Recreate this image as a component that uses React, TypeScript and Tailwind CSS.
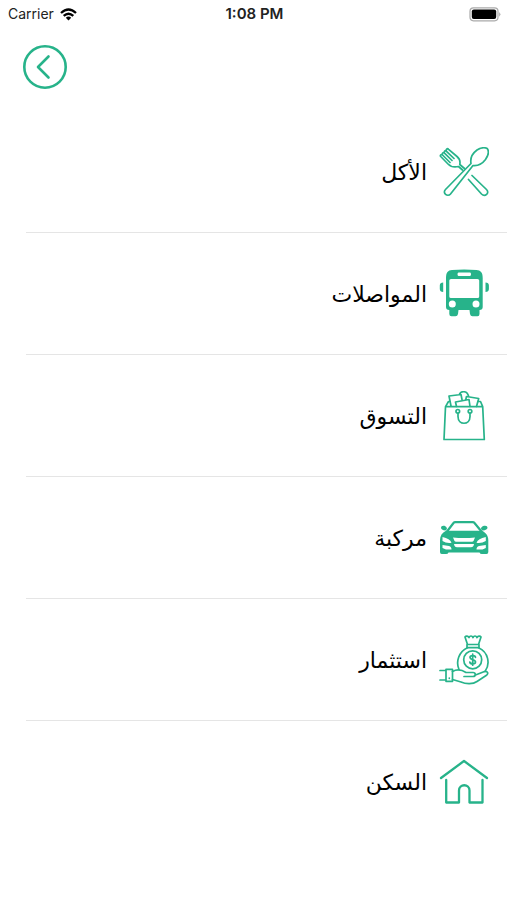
import type { ReactNode } from 'react'

const GREEN = '#27b38a'

function Icon({ children, width = 1.7 }: { children: ReactNode; width?: number }) {
  return (
    <svg
      viewBox="0 0 50 50"
      className="size-[50px] shrink-0"
      fill="none"
      stroke={GREEN}
      strokeWidth={width}
      strokeLinecap="round"
      strokeLinejoin="round"
      aria-hidden="true"
    >
      {children}
    </svg>
  )
}

function FoodIcon() {
  return (
    <Icon>
      <path d="M32 16.500C31 11 34 6 38 3C41.500 .8 46 .2 48.200 1.500C50 4 49.300 8.500 46.500 12.500C43.500 16.500 39 19 34 18.500L11.500 47C8.500 50.500 3 46 6.500 42.500Z" />
      <path d="M23.500 23L19.500 19.500C15.500 20.500 11.500 19.500 9 17L1.700 9.500C.8 8.300 2.200 6.800 3.500 8L11 15.500M3.500 8C2.600 6.500 4.200 5 5.500 6.200L13 13.500M5.500 6.200C4.600 4.500 6.200 3 7.500 4.300L15 11.500M7.500 4.300C6.500 2.500 8.300 1 9.600 2.300L18 9.500C21 12 21.500 14 20.800 17.500L25.500 21.500" />
      <path d="M29.500 32.500L42.500 47C46 50.500 51 46 47.500 42.500L33 28.500" />
    </Icon>
  )
}

function BusIcon() {
  return (
    <Icon>
      <g fill={GREEN} stroke="none">
        <path
          fillRule="evenodd"
          d="M7 9C7 3 9 1.500 13 1Q25 -.2 37.500 1C41.500 1.500 43.700 3 43.700 9V38Q43.700 41 40.500 41V45Q40.500 47.300 38.500 47.300H33.500Q31.500 47.300 31 45L30.500 41H19.500L19 45Q18.500 47.300 16.500 47.300H12.500Q10.300 47.300 10.300 45V41Q7 41 7 38ZM19.500 3.500Q18.500 3.500 18.500 5.200T19.500 7H31Q32 7 32 5.200T31 3.500ZM12 10Q10.300 10 10.300 11.500V27.500Q10.300 29 12 29H38.500Q40.200 29 40.200 27.500V11.500Q40.200 10 38.500 10ZM13.300 31.500A3.500 3.500 0 1 0 13.300 38.500A3.500 3.500 0 1 0 13.300 31.500ZM37 31.500A3.500 3.500 0 1 0 37 38.500A3.500 3.500 0 1 0 37 31.500Z"
        />
        <path d="M4.200 13.500V23C2 23 .8 22 .8 20V16.500C.8 14.500 2 13.500 4.200 13.500ZM46.500 13.500V23C48.700 23 49.900 22 49.900 20V16.500C49.900 14.500 48.700 13.500 46.500 13.500Z" />
      </g>
    </Icon>
  )
}

function ShoppingIcon() {
  return (
    <Icon>
      <path d="M6.500 15.700H43.700L45.300 48.500H5ZM6.500 15.700L9.500 10.500H11M43.700 15.700L41.500 10.500H39" />
      <circle cx="18.800" cy="20.300" r="1.800" />
      <circle cx="31" cy="20.300" r="1.800" />
      <path d="M19 22.500V25.500C19 34.500 31 34.500 31 25.500V22.500" />
      <path d="M12 15L10 5L22 3.500L23 8.500M20.500 3.200C22 -.3 28 -.5 29.500 5M17.500 15.500L16.500 11L30 8.500L31 15.500M27.500 5.500L39.700 7.500L37.500 15.500M27.500 5.500L26.800 8.500" />
    </Icon>
  )
}

function CarIcon() {
  return (
    <Icon width={2.2}>
      <path d="M8 18.500L14.500 10Q15 9.200 16.500 9.200H33.500Q35 9.200 35.500 10L42.500 18.500" />
      <path
        fill={GREEN}
        stroke="none"
        fillRule="evenodd"
        d="M7 17.700H43C47 19.500 49.300 23 49.300 27V39Q49.300 41 47.500 41H43Q41 41 40.500 39.500H9.500Q9 41 7 41H2.700Q1 41 1 39V27C1 23 3 19.500 7 17.700ZM3.500 24V28Q7.500 30.500 12.500 29.700Q11 25.500 3.500 24ZM46.800 24V28Q42.500 30.500 37.500 29.700Q39 25.500 46.800 24ZM14 24.500L15.500 28Q16 28.800 17 28.800H33Q34 28.800 34.500 28L36 24.500Q25 25.500 14 24.500ZM15 31Q15.500 34.300 18 34.300H32Q34.500 34.300 35 31ZM3.500 32V35L7 36.500H12.500Q12.500 33.500 10 33ZM46.800 32V35L43.500 36.500H37.500Q37.500 33.500 40 33Z"
      />
      <path fill={GREEN} stroke="none" d="M8 16L6.500 17.500Q2 17 2 14.500Q2 12.300 5.500 12.800Q8 13.500 8 16ZM42 16L43.500 17.500Q48.500 17 48.500 14.500Q48.500 12.300 45 12.800Q42 13.500 42 16Z" />
    </Icon>
  )
}

function InvestIcon() {
  return (
    <Icon>
      <path d="M28.500 9.500L26 2C27 .5 29 .8 30 2.500C31 .5 33 .5 34 2.500C35 .5 37 .5 38 2.500C39 .8 41 .5 42 2L39.500 9.500M28 9.500H40V12.700H28Z" />
      <path d="M28.500 12.700C20 16.500 16.500 26.500 20 34.500M39.500 12.700C49.500 17 51.500 29 46 36.500" />
      <circle cx="33.700" cy="24.800" r="9" />
      <path d="M36.500 22.300C36 20 31 20 31 22.500C31 25 36.500 24.300 36.500 27C36.500 29.500 31.200 29.500 30.800 27M33.700 19.200V30.200" />
      <path d="M1 35.500H6.500M1 45H6.500M7 34.300H13.500V46.300H7ZM10.300 43V43.300" />
      <path d="M13.500 36.500C18 34 22.500 34.500 27 37.500H34C37 37.500 37 41.500 34 41.500H25M36.500 40L45.500 36.500C48.500 35.500 49.800 38.500 47.500 40.300L38 46.500C34 49.300 27 49.300 22 47L13.500 44.500" />
    </Icon>
  )
}

function HouseIcon() {
  return (
    <Icon width={2.3}>
      <path d="M2 21L25 4L48 21M7.200 23V45.500H20V33.500C20 26.500 30.500 26.500 30.500 33.500V45.500H43.500V23" />
    </Icon>
  )
}

const categories = [
  { label: 'الأكل', icon: <FoodIcon /> },
  { label: 'المواصلات', icon: <BusIcon /> },
  { label: 'التسوق', icon: <ShoppingIcon /> },
  { label: 'مركبة', icon: <CarIcon /> },
  { label: 'استثمار', icon: <InvestIcon /> },
  { label: 'السكن', icon: <HouseIcon /> },
]

function StatusBar() {
  return (
    <div className="grid h-7 grid-cols-3 items-center pl-2 pr-1.5 text-[#222]">
      <div className="flex items-center gap-1.5 text-sm">
        <span>Carrier</span>
        <svg viewBox="0 0 17 13" className="h-[13px] w-[17px]" fill="none" stroke="#000" strokeWidth="2.300">
          <path d="M1 5Q8.500 -2 16 5M3.700 7.900Q8.500 3.500 13.300 7.900" />
          <path d="M5.800 9.800Q8.500 7.400 11.200 9.800L8.500 12.500Z" fill="#000" stroke="none" />
        </svg>
      </div>
      <span className="text-center text-[15px] font-semibold">1:08 PM</span>
      <svg viewBox="0 0 32 15" className="h-[15px] w-8 justify-self-end" fill="none">
        <rect x="1" y=".8" width="28" height="13" rx="3.500" stroke="#aaa" strokeWidth="1.200" />
        <rect x="2.800" y="2.600" width="24.400" height="9.400" rx="2" fill="#000" />
        <path d="M30.300 5Q32.300 7.300 30.300 9.700Z" fill="#999" />
      </svg>
    </div>
  )
}

export default function App() {
  return (
    <div className="min-h-screen bg-white font-['Inter','Liberation_Sans',sans-serif]">
      <StatusBar />
      <header className="px-[22px] pt-4">
        <button type="button" aria-label="رجوع" className="block rounded-full">
          <svg viewBox="0 0 46 46" className="size-[46px]" fill="none" stroke={GREEN} strokeWidth="2.600" strokeLinecap="round" strokeLinejoin="round">
            <circle cx="23" cy="23" r="20.700" />
            <path d="M26.500 12.500L16 23L26.500 33.500" />
          </svg>
        </button>
      </header>
      <ul dir="rtl" className="mt-[21px] pl-[26px]">
        {categories.map(({ label, icon }) => (
          <li key={label} className="border-b border-[#e5e5e5] last:border-b-0">
            <button type="button" className="flex h-[121px] w-full items-center gap-3 pr-[18px] text-right">
              {icon}
              <span className="pt-0.5 font-['DejaVu_Sans',sans-serif] text-[22px] text-black">{label}</span>
            </button>
          </li>
        ))}
      </ul>
    </div>
  )
}
